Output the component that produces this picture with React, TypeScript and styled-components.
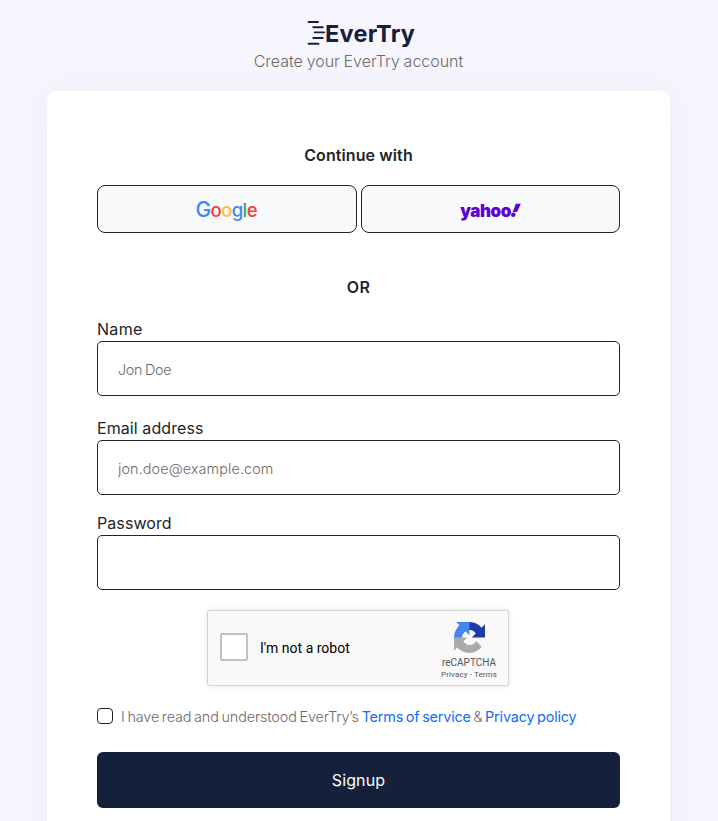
import styled, { createGlobalStyle } from 'styled-components'

export default function App() {
  return (
    <>
      <GlobalStyle />
      <Page>
        <Header>
          <Brand />
          <Tagline>Create your EverTry account</Tagline>
        </Header>
        <Card>
          <Heading>Continue with</Heading>
          <Providers>
            <ProviderButton type="button" aria-label="Google">
              <GoogleLogo />
            </ProviderButton>
            <ProviderButton type="button" aria-label="Yahoo">
              <YahooLogo />
            </ProviderButton>
          </Providers>
          <Divider>OR</Divider>
          <Field $gap={20}>
            <Label htmlFor="name" $tracking={0.3}>Name</Label>
            <Input id="name" placeholder="Jon Doe" $tracking={-0.3} />
          </Field>
          <Field $gap={16}>
            <Label htmlFor="email" $tracking={0.08}>Email address</Label>
            <Input id="email" type="email" placeholder="jon.doe@example.com" $tracking={0.1} />
          </Field>
          <Field $gap={20}>
            <Label htmlFor="password" $tracking={0.08}>Password</Label>
            <Input id="password" type="password" $tracking={0} />
          </Field>
          <Captcha>
            <CaptchaBox />
            <CaptchaLabel>I'm not a robot</CaptchaLabel>
            <CaptchaBrand>
              <CaptchaLogo />
              <CaptchaName>reCAPTCHA</CaptchaName>
              <CaptchaLinks>Privacy - Terms</CaptchaLinks>
            </CaptchaBrand>
          </Captcha>
          <Terms>
            <Checkbox type="checkbox" id="terms" />
            <TermsLabel htmlFor="terms">
              I have read and understood EverTry’s <Link href="#">Terms of service</Link> &amp;{' '}
              <Link href="#">Privacy policy</Link>
            </TermsLabel>
          </Terms>
          <Submit type="button">Signup</Submit>
        </Card>
      </Page>
    </>
  )
}

const Brand = () => (
  <BrandSvg viewBox="0 0 110 30" role="img">
    <g stroke="#15203a" strokeWidth="1.9" strokeLinecap="round">
      <path d="M4.5 4h9.5M9.3 9.2h9.5M10.7 14.4h9.5M9.3 20h9.5M4.5 25.8h10" />
    </g>
    <text x="21" y="24" textLength="90" fontSize="23.5" fontWeight="650" fill="#15203a">
      EverTry
    </text>
  </BrandSvg>
)

const GoogleLogo = () => (
  <ProviderSvg viewBox="0 0 72 28">
    <text x="4.5" y="20.3" textLength="62" fontSize="18.5" fontWeight="500">
      <tspan fill="#4285f4" fontSize="21">G</tspan>
      <tspan fill="#ff3a36">o</tspan>
      <tspan fill="#ffba3b">o</tspan>
      <tspan fill="#4285f4">g</tspan>
      <tspan fill="#34a853">l</tspan>
      <tspan fill="#ff3a36">e</tspan>
    </text>
  </ProviderSvg>
)

const YahooLogo = () => (
  <ProviderSvg viewBox="0 0 72 28">
    <text x="5.3" y="19.8" textLength="51" fontSize="17" fontWeight="900" fill="#5f01d1">
      yahoo
    </text>
    <path d="M60.8 6.8h5l-3.7 8.2h-4.3z" fill="#5f01d1" />
    <circle cx="58.3" cy="17.7" r="2.3" fill="#5f01d1" />
  </ProviderSvg>
)

const CaptchaLogo = () => (
  <CaptchaSvg viewBox="0 0 64 64">
    <path
      fill="#1c3aa9"
      d="M64 31.955l-.033-1.37V4.687l-7.16 7.16C50.948 4.674 42.033.093 32.05.093c-10.4 0-19.622 4.96-25.458 12.64l11.736 11.86a15.55 15.55 0 0 1 4.754-5.334c2.05-1.6 4.952-2.906 8.968-2.906.485 0 .86.057 1.135.163 4.976.393 9.288 3.14 11.828 7.124l-8.307 8.307L64 31.953"
    />
    <path
      fill="#4285f4"
      d="M31.862.094l-1.37.033H4.594l7.16 7.16C4.58 13.147 0 22.06 0 32.046c0 10.4 4.96 19.622 12.64 25.458L24.5 45.768a15.55 15.55 0 0 1-5.334-4.754c-1.6-2.05-2.906-4.952-2.906-8.968 0-.485.057-.86.163-1.135.393-4.976 3.14-9.288 7.124-11.828l8.307 8.307L31.86.095"
    />
    <path
      fill="#ababab"
      d="M.001 32.045l.033 1.37v25.898l7.16-7.16c5.86 7.173 14.774 11.754 24.76 11.754 10.4 0 19.622-4.96 25.458-12.64l-11.736-11.86a15.55 15.55 0 0 1-4.754 5.334c-2.05 1.6-4.952 2.906-8.968 2.906-.485 0-.86-.057-1.135-.163-4.976-.393-9.288-3.14-11.828-7.124l8.307-8.307c-10.522.04-22.4.066-27.295-.005"
    />
  </CaptchaSvg>
)

const GlobalStyle = createGlobalStyle`
  * {
    box-sizing: border-box;
  }

  body {
    margin: 0;
    background: #f7f6ff;
    font-family: Inter, 'Liberation Sans', sans-serif;
    font-size: 16px;
    line-height: 24px;
    color: #212529;
  }
`

const Page = styled.main`
  height: 821px;
  padding: 18px 48px 0 47px;
  overflow: hidden;
`

const Header = styled.header`
  height: 73px;
  display: flex;
  flex-direction: column;
  align-items: center;
`

const BrandSvg = styled.svg`
  width: 110px;
  height: 30px;
  overflow: visible;
`

const Tagline = styled.p`
  margin: 1px 0 0;
  font-weight: 330;
  letter-spacing: -0.02px;
  word-spacing: -0.7px;
  color: #6a6a6a;
`

const Card = styled.section`
  height: 800px;
  padding: 52px 50px;
  border-radius: 10px;
  background: #fff;
  box-shadow: 0 0 40px rgba(51, 51, 102, 0.05);
`

const Heading = styled.h2`
  margin: 0 0 18px;
  font-size: 16px;
  font-weight: 600;
  line-height: 24px;
  letter-spacing: 0.1px;
  text-align: center;
`

const Divider = styled(Heading)`
  margin: 42px 0 18px;
  letter-spacing: 0.4px;
`

const Providers = styled.div`
  display: grid;
  grid-template-columns: 260px 1fr;
  gap: 4px;
`

const ProviderButton = styled.button`
  height: 48px;
  padding: 4px 0 0;
  display: flex;
  align-items: center;
  justify-content: center;
  border: 1px solid #212529;
  border-radius: 8px;
  background: #f8f9fb;
  font-family: inherit;
`

const ProviderSvg = styled.svg`
  width: 72px;
  height: 28px;
  overflow: visible;
`

const Field = styled.div<{ $gap: number }>`
  display: flex;
  flex-direction: column;
  margin-bottom: ${({ $gap }) => $gap}px;
`

const Label = styled.label<{ $tracking: number }>`
  font-weight: 370;
  letter-spacing: ${({ $tracking }) => $tracking}px;
`

const Input = styled.input<{ $tracking: number }>`
  height: 55px;
  padding: 1px 20px 0;
  border: 1px solid #212529;
  border-radius: 5px;
  background: #fff;
  font-family: inherit;
  font-size: 14.4px;
  font-weight: 320;
  letter-spacing: ${({ $tracking }) => $tracking}px;
  word-spacing: -1px;

  &::placeholder {
    color: #6a6a6a;
  }
`

const Captcha = styled.div`
  width: 302px;
  height: 76px;
  margin: 0 0 0 110px;
  padding-left: 12px;
  display: flex;
  align-items: center;
  border: 1px solid #d3d3d3;
  border-radius: 3px;
  background: #f9f9f9;
  box-shadow: 0 0 4px 1px rgba(0, 0, 0, 0.08);
  font-family: Roboto, sans-serif;
`

const CaptchaBox = styled.span`
  width: 28px;
  height: 28px;
  margin: -2px 12px 0 0;
  border: 2px solid #c1c1c1;
  border-radius: 2px;
  background: #fff;
`

const CaptchaLabel = styled.span`
  font-size: 14px;
  line-height: 17px;
  color: #000;
`

const CaptchaBrand = styled.div`
  width: 70px;
  margin: 7px 4px 0 auto;
  display: flex;
  flex-direction: column;
  align-items: center;
  color: #555;
`

const CaptchaSvg = styled.svg`
  width: 31px;
  height: 31px;
`

const CaptchaName = styled.span`
  margin-top: 4px;
  font-size: 10px;
  line-height: 12px;
`

const CaptchaLinks = styled.span`
  font-size: 8px;
  line-height: 12px;
  letter-spacing: 0.1px;
`

const Terms = styled.div`
  height: 24px;
  margin: 18px 0 24px;
  display: flex;
  align-items: center;
`

const Checkbox = styled.input`
  appearance: none;
  width: 16px;
  height: 16px;
  margin: 0 8px 0 0;
  border: 1px solid #212529;
  border-radius: 4px;
`

const TermsLabel = styled.label`
  padding-top: 1px;
  font-size: 14.4px;
  font-weight: 320;
  letter-spacing: -0.12px;
  word-spacing: -1.2px;
  white-space: nowrap;
  color: #6a6a6a;
`

const Link = styled.a`
  font-weight: 370;
  letter-spacing: -0.17px;
  color: #0d6efd;
  text-decoration: none;
`

const Submit = styled.button`
  width: 100%;
  height: 56px;
  border: 0;
  border-radius: 6px;
  background: #15203a;
  color: #fff;
  font-family: inherit;
  font-size: 16px;
  letter-spacing: 0.1px;
`
